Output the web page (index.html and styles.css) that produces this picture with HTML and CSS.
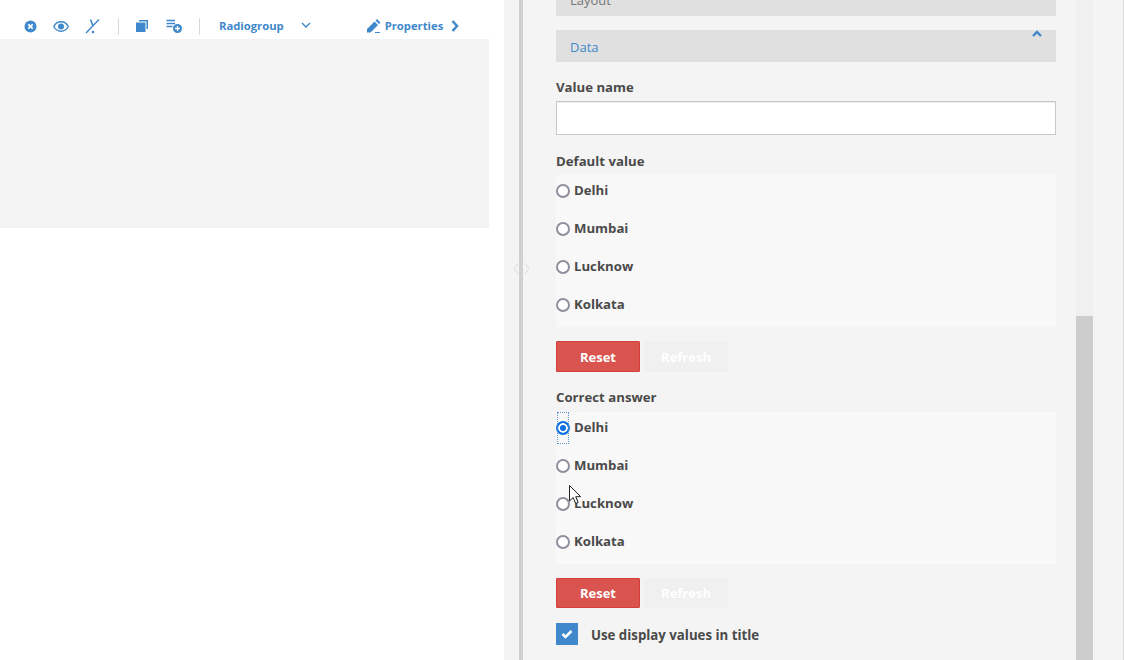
FILE: index.html
```html
<!DOCTYPE html>
<html lang="en">
<head>
<meta charset="utf-8">
<title>Survey editor</title>
<link rel="stylesheet" href="styles.css">
</head>
<body>
<div class="app">
  <main class="editor">
    <div class="toolbar">
      <div class="tool-group">
        <svg class="icon" width="13" height="13" viewBox="0 0 13 13"><circle cx="6.500" cy="6.500" r="6" fill="#3f88cb"/><path d="M4.300 4.300l4.400 4.400M8.700 4.300L4.300 8.700" stroke="#fff" stroke-width="1.800"/></svg>
        <svg class="icon" width="16" height="11" viewBox="0 0 16 11"><path d="M0.700 5.500C2.500 2.200 5 .8 8 .8s5.500 1.400 7.300 4.700C13.500 8.800 11 10.200 8 10.200S2.500 8.800.7 5.500z" fill="none" stroke="#3f88cb" stroke-width="1.400"/><circle cx="8" cy="5.500" r="3" fill="#3f88cb"/></svg>
        <svg class="icon" width="15" height="15" viewBox="0 0 15 15"><path d="M14 0.500L1 14" stroke="#3f88cb" stroke-width="1.400" fill="none"/><path d="M5.500 0.500l2.500 6.500" stroke="#3f88cb" stroke-width="1.600" fill="none"/><circle cx="8" cy="13" r="1.300" fill="#3f88cb"/></svg>
      </div>
      <span class="divider"></span>
      <div class="tool-group tool-group-two">
        <svg class="icon" width="12" height="12" viewBox="0 0 12 12"><path d="M3 0h9v9h-1.500V1.500H3z" fill="#3f88cb"/><rect x="0" y="2.500" width="9.500" height="9.500" fill="#3f88cb"/></svg>
        <svg class="icon" width="16" height="14" viewBox="0 0 16 14"><path d="M0.500 1.500h8.500M0.500 4.500h8.500M0.500 7.500h6" stroke="#3f88cb" stroke-width="1.500"/><circle cx="11.500" cy="9.500" r="4.500" fill="#3f88cb"/><path d="M9 9.500h5M11.500 7v5" stroke="#fff" stroke-width="1.300"/></svg>
      </div>
      <span class="divider divider-second"></span>
      <span class="tool-label question-type">Radiogroup</span>
      <svg class="chevron-down" width="10" height="6" viewBox="0 0 10 6"><path d="M1 1l4 4 4-4" fill="none" stroke="#3f88cb" stroke-width="1.300"/></svg>
      <svg class="pencil" width="14" height="14" viewBox="0 0 14 14"><path d="M0 13.500V10L7.500 2.500 11 6 3.500 13.500zM8.500 1.500L10 0l3.500 3.500L12 5z" fill="#3f88cb"/><path d="M8 13.500h5" stroke="#3f88cb"/></svg>
      <span class="tool-label properties-label">Properties</span>
      <svg class="chevron-right" width="8" height="12" viewBox="0 0 8 12"><path d="M1.500 1l4.500 5-4.500 5" fill="none" stroke="#3f88cb" stroke-width="2.500"/></svg>
    </div>
    <div class="canvas"></div>
  </main>

  <aside class="side">
    <div class="splitter">
      <svg class="grip" width="17" height="11" viewBox="0 0 17 11"><path d="M5 .5l-4 5 4 5M12 .5l4 5-4 5" fill="none" stroke="#d6d6d6"/></svg>
    </div>
    <div class="props">
      <div class="section section-clipped"><span>Layout</span></div>
      <div class="section section-open">
        <span>Data</span>
        <svg class="chevron-up" width="10" height="7" viewBox="0 0 10 7"><path d="M1 6l4-4 4 4" fill="none" stroke="#3f88cb" stroke-width="2.400"/></svg>
      </div>

      <label class="field-label label-value">Value name</label>
      <input class="text-input" type="text">

      <div class="field-label label-default">Default value</div>
      <div class="radio-group">
        <div class="radio-row"><span class="radio"></span><span class="radio-text">Delhi</span></div>
        <div class="radio-row"><span class="radio"></span><span class="radio-text">Mumbai</span></div>
        <div class="radio-row"><span class="radio"></span><span class="radio-text">Lucknow</span></div>
        <div class="radio-row"><span class="radio"></span><span class="radio-text">Kolkata</span></div>
      </div>
      <div class="buttons">
        <button class="btn btn-reset" type="button">Reset</button>
        <button class="btn btn-refresh" type="button">Refresh</button>
      </div>

      <div class="field-label label-correct">Correct answer</div>
      <div class="radio-group radio-group-second">
        <div class="radio-row"><span class="radio-focus"><span class="radio radio-on"></span></span><span class="radio-text">Delhi</span></div>
        <div class="radio-row"><span class="radio"></span><span class="radio-text">Mumbai</span></div>
        <div class="radio-row"><span class="radio"></span><span class="radio-text">Lucknow</span></div>
        <div class="radio-row"><span class="radio"></span><span class="radio-text">Kolkata</span></div>
      </div>
      <div class="buttons buttons-second">
        <button class="btn btn-reset" type="button">Reset</button>
        <button class="btn btn-refresh" type="button">Refresh</button>
      </div>

      <div class="check-row">
        <span class="checkbox"><svg width="12" height="10" viewBox="0 0 12 10"><path d="M1.500 5l3 3L10.500 2" fill="none" stroke="#fff" stroke-width="2.500"/></svg></span>
        <span class="check-text">Use display values in title</span>
      </div>
    </div>
    <div class="scrollbar"><div class="thumb"></div></div>
  </aside>
</div>
<svg class="cursor" width="13" height="20" viewBox="0 0 13 20"><path d="M.5.500v15.500l3.700-3.500 2.500 6 2.500-1-2.500-5.800h5z" fill="#fff" stroke="#222" stroke-width="1"/></svg>
</body>
</html>
```
FILE: styles.css
```css
* { box-sizing: border-box; }
html, body { margin: 0; height: 100%; overflow: hidden; background: #fff; }
body { font-family: "Open Sans", "Liberation Sans", sans-serif; font-size: 13px; color: #4a4a4a; }

.app { display: flex; width: 1124px; height: 660px; }

.editor { width: 504px; flex: none; background: #fff; }
.toolbar { display: flex; align-items: center; height: 39px; padding: 13px 0 0 24px; }
.tool-group { display: flex; align-items: center; gap: 16px; }
.tool-group-two { gap: 18px; margin-left: 17px; }
.icon { display: block; flex: none; }
.divider { width: 1px; height: 17px; background: #d9d9d9; margin-left: 18px; }
.divider-second { margin-left: 17px; }
.tool-label { color: #3f88cb; font-size: 11.25px; font-weight: 700; white-space: nowrap; margin-bottom: 2px; }
.question-type { margin-left: 19px; }
.chevron-down { margin: 0 0 2px 17px; flex: none; }
.pencil { margin-left: 56px; flex: none; }
.properties-label { margin-left: 4px; }
.chevron-right { margin-left: 8px; flex: none; }
.canvas { width: 489px; height: 189px; background: #f3f3f3; }

.side { display: flex; flex: 1; background: #f4f4f4; border-right: 1px solid #d8d8d8; }
.splitter { width: 19px; flex: none; border-right: 4px solid #d0d0d0; margin-right: 33px; position: relative; }
.grip { position: absolute; left: 9px; top: 263px; }

.props { width: 500px; flex: none; }
.section { background: #e0e0e0; color: #3f88cb; padding-left: 14px; font-size: 13px; display: flex; align-items: center; position: relative; }
.section-clipped { height: 16px; color: #777; overflow: hidden; align-items: flex-end; line-height: 18px; }
.section-clipped span { margin-bottom: 7px; }
.section-open { height: 32px; margin-top: 14px; padding-top: 2px; }
.chevron-up { position: absolute; right: 14px; top: 0; }

.field-label { font-weight: 700; font-size: 13.2px; line-height: 18px; color: #4a4a4a; display: block; }
.label-value { margin-top: 16px; }
.text-input { display: block; width: 500px; height: 34px; margin-top: 5px; background: #fff; border: 1px solid #c8c8c8; box-shadow: inset 0 1px 0 #ededed; padding: 0 10px; }
.label-default { margin-top: 17px; }
.label-correct { margin-top: 16px; }

.radio-group { display: flex; flex-direction: column; gap: 6px; background: #f8f8f8; height: 152px; margin-top: 5px; padding-bottom: 6px; }
.radio-group-second { margin-top: 6px; }
.radio-row { display: flex; align-items: center; height: 32px; }
.radio { display: block; width: 14px; height: 14px; border: 2px solid #8f8f9d; border-radius: 50%; background: #fff; flex: none; }
.radio-on { border-color: #0f6fe0; background: #0f6fe0; box-shadow: inset 0 0 0 2px #fff; margin-left: -1px; }
.radio-focus { display: flex; align-items: center; outline: 1px dotted #5a9bd5; outline-offset: -1px; height: 32px; width: 12px; margin: 0 1px; flex: none; }
.radio-text { margin-left: 4px; font-weight: 700; font-size: 13.2px; color: #4a4a4a; position: relative; top: -1px; }

.buttons { display: flex; gap: 4px; margin-top: 14px; }
.buttons-second .btn { height: 30px; }
.btn { width: 84px; height: 31px; padding: 0; font-family: inherit; font-size: 13px; font-weight: 700; color: #fff; }
.btn-reset { background: #d9534f; border: 1px solid #d43f3a; border-radius: 1px; }
.btn-refresh { background: #f0f0f0; border: 1px solid #f0f0f0; }

.check-row { display: flex; align-items: center; margin-top: 15px; }
.checkbox { width: 22px; height: 22px; background: #3f88cb; display: flex; align-items: center; justify-content: center; flex: none; }
.check-text { margin-left: 13px; padding-top: 2px; font-weight: 700; font-size: 13.25px; color: #4a4a4a; }

.scrollbar { width: 17px; height: 660px; background: #f0f0f0; margin-left: 20px; flex: none; padding-top: 316px; }
.thumb { height: 344px; background: #cdcdcd; }

.cursor { position: absolute; left: 569px; top: 485px; }
```
